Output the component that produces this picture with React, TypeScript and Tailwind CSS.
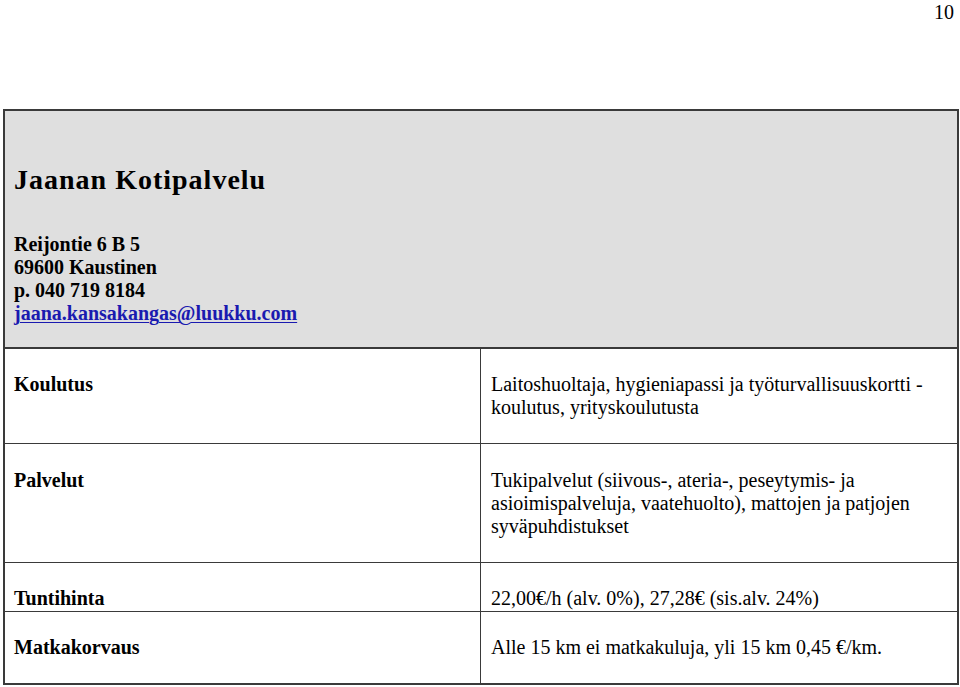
import React from 'react';

const serif = { fontFamily: '"Liberation Serif", "Times New Roman", serif' };

const rows = [
  {
    label: 'Koulutus',
    lines: ['Laitoshuoltaja, hygieniapassi ja työturvallisuuskortti -', 'koulutus, yrityskoulutusta'],
    cls: 'h-[94px] pt-[24px]',
  },
  {
    label: 'Palvelut',
    lines: [
      'Tukipalvelut (siivous-, ateria-, peseytymis- ja',
      'asioimispalveluja, vaatehuolto), mattojen ja patjojen',
      'syväpuhdistukset',
    ],
    cls: 'h-[118px] pt-[25px]',
  },
  {
    label: 'Tuntihinta',
    lines: ['22,00€/h (alv. 0%), 27,28€ (sis.alv. 24%)'],
    cls: 'h-[48px] pt-[24px]',
  },
  {
    label: 'Matkakorvaus',
    lines: ['Alle 15 km ei matkakuluja, yli 15 km 0,45 €/km.'],
    cls: 'h-[71px] pt-[24px]',
  },
];

export default function App() {
  return (
    <div className="w-[960px] h-[687px] bg-white text-black overflow-hidden" style={serif}>
      <div className="flex justify-end pr-[6px] pt-[1px] h-[109px] text-[20px] leading-[23px]">10</div>

      <div className="ml-[3px] w-[956px] border-2 border-[#3a3a3a]">
        <div className="bg-[#dfdfdf] h-[238px] pl-[9px] pt-[52px] border-b-2 border-[#3a3a3a]">
          <h1 className="font-bold text-[28px] leading-[34px] tracking-[1px]">Jaanan Kotipalvelu</h1>
          <div className="mt-[36px] font-bold text-[20px] leading-[23px]">
            <div>Reijontie 6 B 5</div>
            <div>69600 Kaustinen</div>
            <div>p. 040 719 8184</div>
            <a href="#" className="text-[#1a1ab0] underline decoration-1 underline-offset-2">
              jaana.kansakangas@luukku.com
            </a>
          </div>
        </div>

        {rows.map((r, i) => (
          <div
            key={r.label}
            className={`grid grid-cols-[476px_1fr] ${i < rows.length - 1 ? 'border-b-[1.5px] border-[#3a3a3a]' : ''}`}
          >
            <div className={`pl-[9px] font-bold text-[20px] leading-[23px] border-r-[1.5px] border-[#3a3a3a] ${r.cls}`}>
              {r.label}
            </div>
            <div className={`pl-[10px] text-[20px] leading-[23px] ${r.cls}`}>
              {r.lines.map((l) => (
                <div key={l}>{l}</div>
              ))}
            </div>
          </div>
        ))}
      </div>
    </div>
  );
}
